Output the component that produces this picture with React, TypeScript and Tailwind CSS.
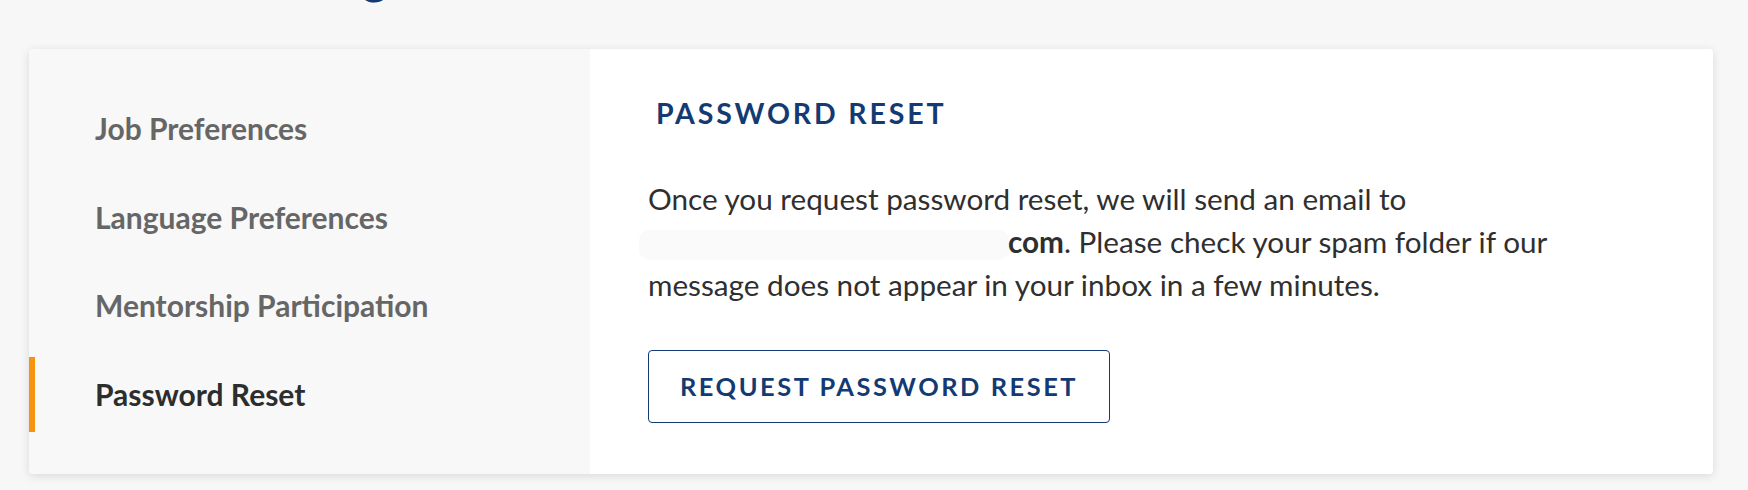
import React from 'react';

const navItems = [
  { label: 'Job Preferences', active: false },
  { label: 'Language Preferences', active: false },
  { label: 'Mentorship Participation', active: false },
  { label: 'Password Reset', active: true },
];

function Sidebar() {
  return (
    <nav className="w-[561px] shrink-0 bg-[#f8f8f8] py-[42px] flex flex-col gap-[14px]">
      {navItems.map((item) => (
        <div key={item.label} className="relative h-[75px] flex items-center pl-[66px]">
          {item.active && <div className="absolute left-0 top-0 bottom-0 w-[6px] bg-[#f7940f]" />}
          <span
            className={
              'text-[30px] font-bold ' + (item.active ? 'text-[#2d2d2d]' : 'text-[#666666]')
            }
          >
            {item.label}
          </span>
        </div>
      ))}
    </nav>
  );
}

function PasswordReset() {
  return (
    <section className="flex-1 bg-white pl-[58px] pr-[58px] pt-[42px] pb-[50px]">
      <h2 className="pl-[8px] text-[28.5px] font-bold tracking-[0.1em] text-[#143a73] leading-[44px]">
        PASSWORD RESET
      </h2>
      <p className="mt-[42px] text-[29.7px] leading-[43px] text-[#2f2f2f]">
        Once you request password reset, we will send an email to{' '}
        <span className="inline-block align-middle w-[370px] h-[30px] -ml-[9px] mr-[-1px] rounded-[10px] bg-[#fafafa]" />
        <span className="font-bold">com</span>. Please check your spam folder if our message does
        not appear in your inbox in a few minutes.
      </p>
      <button className="mt-[44px] h-[73px] px-[31px] border-[1.5px] border-[#143a73] rounded-[4px] text-[25.4px] font-bold tracking-[0.1em] text-[#143a73] bg-white">
        REQUEST PASSWORD RESET
      </button>
    </section>
  );
}

export default function App() {
  return (
    <div className="min-h-[490px] bg-[#f7f7f7] font-['Lato',sans-serif] px-[29px] pb-[16px]">
      {/* page title, only its descenders peek out above the card */}
      <div className="h-[49px] overflow-hidden">
        <h1 className="-mt-[54px] ml-[19px] text-[48px] font-bold text-[#143a73] leading-[60px]">
          Account Settings
        </h1>
      </div>
      <div className="w-[1684px] h-[425px] flex rounded-[4px] overflow-hidden shadow-[0_2px_10px_rgba(0,0,0,0.12)]">
        <Sidebar />
        <PasswordReset />
      </div>
    </div>
  );
}
